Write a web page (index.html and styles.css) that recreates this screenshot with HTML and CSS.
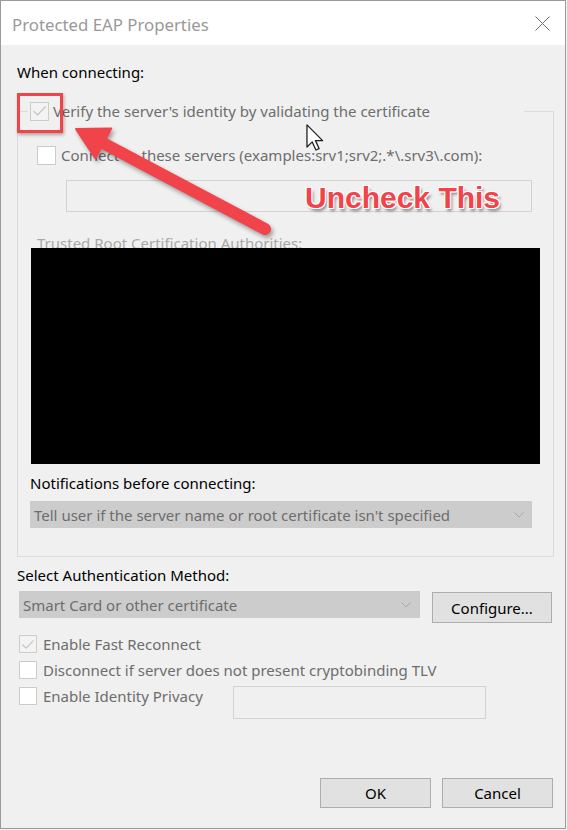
FILE: index.html
```html
<!DOCTYPE html>
<html lang="en">
<head>
<meta charset="utf-8">
<title>Protected EAP Properties</title>
<link rel="stylesheet" href="styles.css">
</head>
<body>
<div class="dialog">
  <div class="titlebar">
    <span class="title">Protected EAP Properties</span>
    <svg class="close" width="15" height="15" viewBox="0 0 15 15"><path d="M0.5 0.5 L14.5 14.5 M14.5 0.5 L0.5 14.5" stroke="#6b6b6b" stroke-width="1" fill="none"/></svg>
  </div>
  <div class="content">
    <div class="text dark when">When connecting:</div>
    <fieldset class="group">
      <legend class="group-head">
        <span class="cb checked"><svg width="15" height="12" viewBox="0 0 15 12"><polyline points="1.5,6 5.5,10 13.5,1.5" fill="none" stroke="#c6c6c6" stroke-width="1.3"/></svg></span>
        <span class="lbl verify">Verify the server's identity by validating the certificate</span>
      </legend>
      <div class="row connect"><span class="cb"></span><span class="lbl">Connect to these servers (examples:srv1;srv2;.*\.srv3\.com):</span></div>
      <div class="textbox servers"></div>
      <div class="text trusted">Trusted Root Certification Authorities:</div>
      <div class="redacted"></div>
      <div class="text dark notif">Notifications before connecting:</div>
      <div class="select notify"><span>Tell user if the server name or root certificate isn't specified</span><svg width="10" height="6" viewBox="0 0 10 6"><polyline points="0.5,0.5 5,5 9.5,0.5" fill="none" stroke="#a9a9a9" stroke-width="1"/></svg></div>
    </fieldset>
    <div class="text dark auth-label">Select Authentication Method:</div>
    <div class="auth-row">
      <div class="select method"><span>Smart Card or other certificate</span><svg width="10" height="6" viewBox="0 0 10 6"><polyline points="0.5,0.5 5,5 9.5,0.5" fill="none" stroke="#a9a9a9" stroke-width="1"/></svg></div>
      <div class="button configure">Configure...</div>
    </div>
    <div class="options">
      <div class="row"><span class="cb checked"><svg width="14" height="11" viewBox="0 0 15 12"><polyline points="1.5,6 5.5,10 13.5,1.5" fill="none" stroke="#c6c6c6" stroke-width="1.3"/></svg></span><span class="lbl">Enable Fast Reconnect</span></div>
      <div class="row"><span class="cb"></span><span class="lbl">Disconnect if server does not present cryptobinding TLV</span></div>
      <div class="row identity"><span class="cb"></span><span class="lbl">Enable Identity Privacy</span><div class="textbox privacy"></div></div>
    </div>
    <div class="footer">
      <div class="button">OK</div>
      <div class="button">Cancel</div>
    </div>
  </div>
</div>

<svg class="arrow" width="567" height="830" viewBox="0 0 567 830">
  <line x1="101" y1="142" x2="265" y2="229" stroke="#f0434a" stroke-width="12" stroke-linecap="round"/>
  <polygon points="76,129 111.3,128.4 95.5,158.4" fill="#f0434a" stroke="#f0434a" stroke-width="2" stroke-linejoin="round"/>
</svg>
<div class="highlight"></div>
<div class="callout">Uncheck This</div>
<svg class="cursor" width="18" height="27" viewBox="0 0 12.5 19"><path d="M0.6 0.6 V16.2 L4.3 12.6 L6.9 18.3 L9.1 17.3 L6.6 11.7 H11.6 Z" fill="#fff" stroke="#1e1e1e" stroke-width="0.9" stroke-linejoin="round"/></svg>
</body>
</html>
```

FILE: styles.css
```css
body {
  margin: 0;
  width: 567px;
  height: 830px;
  overflow: hidden;
  position: relative;
  background: #f4f4f4;
  font-family: "Noto Sans", "Open Sans", sans-serif;
  font-size: 15px;
}

.dialog {
  box-sizing: border-box;
  width: 566px;
  height: 829px;
  border: 1px solid #9a9a9a;
  background: #f0f0f0;
  display: flex;
  flex-direction: column;
}

.titlebar {
  height: 44px;
  flex: none;
  background: #fff;
  display: flex;
  align-items: center;
  justify-content: space-between;
  padding: 0 15px 0 11px;
}

.title {
  font-size: 16.8px;
  color: #999;
  padding-top: 3px;
}

.close {
  display: block;
}

.content {
  flex: 1;
  display: flex;
  flex-direction: column;
  padding: 0 12px 0 16px;
}

.text {
  line-height: 20px;
}

.dark {
  color: #000;
}

.when {
  margin-top: 17px;
}

.group {
  margin: 19px 0 0 0;
  padding: 24px 12px 28px 12px;
  border: 1px solid #dcdcdc;
  width: 537px;
  box-sizing: border-box;
  min-width: 0;
}

.group-head {
  display: flex;
  align-items: center;
  height: 20px;
  width: 496px;
  box-sizing: border-box;
  padding: 0 2px;
  margin-left: -2px;
  color: #6d6d6d;
}

.cb {
  width: 19px;
  height: 19px;
  box-sizing: border-box;
  border: 1px solid #cccccc;
  background: #fff;
  flex: none;
  display: flex;
  align-items: center;
  justify-content: center;
}

.cb.checked {
  background: #f3f3f3;
}

.verify {
  margin-left: 4px;
  white-space: nowrap;
}

.row {
  display: flex;
  align-items: center;
  height: 20px;
  color: #6d6d6d;
  white-space: nowrap;
}

.connect {
  margin-left: 7px;
}

.connect .lbl {
  margin-left: 5px;
}

.textbox {
  border: 1px solid #d2d2d2;
  background: #f0f0f0;
  box-sizing: border-box;
  flex: none;
}

.servers {
  margin: 15px 0 0 36px;
  width: 466px;
  height: 32px;
}

.trusted {
  margin: 21px 0 0 7px;
  color: #a8a8a8;
}

.redacted {
  position: relative;
  margin: -5px 0 0 1px;
  width: 509px;
  height: 216px;
  background: #000;
}

.notif {
  margin-top: 9px;
}

.select {
  display: flex;
  align-items: center;
  justify-content: space-between;
  background: #cccccc;
  color: #6d6d6d;
  height: 27px;
  box-sizing: border-box;
  padding: 0 8px 0 4px;
  white-space: nowrap;
}

.select svg {
  display: block;
}

.notify {
  margin-top: 8px;
  width: 502px;
}

.auth-label {
  margin-top: 8px;
}

.auth-row {
  display: flex;
  align-items: flex-start;
  margin-top: 6px;
}

.method {
  margin-left: 2px;
  width: 401px;
  padding-right: 9px;
}

.button {
  box-sizing: border-box;
  border: 1px solid #adadad;
  background: #e1e1e1;
  display: flex;
  align-items: center;
  justify-content: center;
  color: #000;
}

.configure {
  margin: 1px 0 0 12px;
  width: 120px;
  height: 31px;
}

.options {
  margin-top: 11px;
  display: flex;
  flex-direction: column;
  gap: 6px;
  padding-left: 2px;
}

.options .cb {
  width: 18px;
  height: 18px;
}

.options .lbl {
  margin-left: 6px;
}

.identity {
  align-items: flex-start;
  height: auto;
}

.identity .cb {
  margin-top: 1px;
}

.identity .lbl {
  width: 190px;
  flex: none;
  line-height: 20px;
}

.privacy {
  width: 253px;
  height: 33px;
}

.footer {
  margin-top: 59px;
  display: flex;
  justify-content: flex-end;
  gap: 11px;
}

.footer .button {
  width: 111px;
  height: 30px;
}

/* annotation overlays */
.arrow {
  position: absolute;
  left: 0;
  top: 0;
  filter: drop-shadow(2px 3px 2px rgba(0, 0, 0, 0.35));
}

.highlight {
  position: absolute;
  left: 17px;
  top: 93px;
  width: 46px;
  height: 40px;
  box-sizing: border-box;
  border: 3px solid #f0434a;
  box-shadow: 1px 2px 3px rgba(0, 0, 0, 0.3);
}

.callout {
  position: absolute;
  left: 305px;
  top: 183px;
  font: 700 30px/30px "Liberation Sans", Arial, sans-serif;
  color: #f0434a;
  white-space: nowrap;
  text-shadow:
    1px 0 0 #fff, -1px 0 0 #fff, 0 1px 0 #fff, 0 -1px 0 #fff,
    1px 1px 0 #fff, -1px -1px 0 #fff, 1px -1px 0 #fff, -1px 1px 0 #fff,
    2px 3px 3px rgba(0, 0, 0, 0.45);
}

.cursor {
  position: absolute;
  left: 306px;
  top: 124px;
}
```
